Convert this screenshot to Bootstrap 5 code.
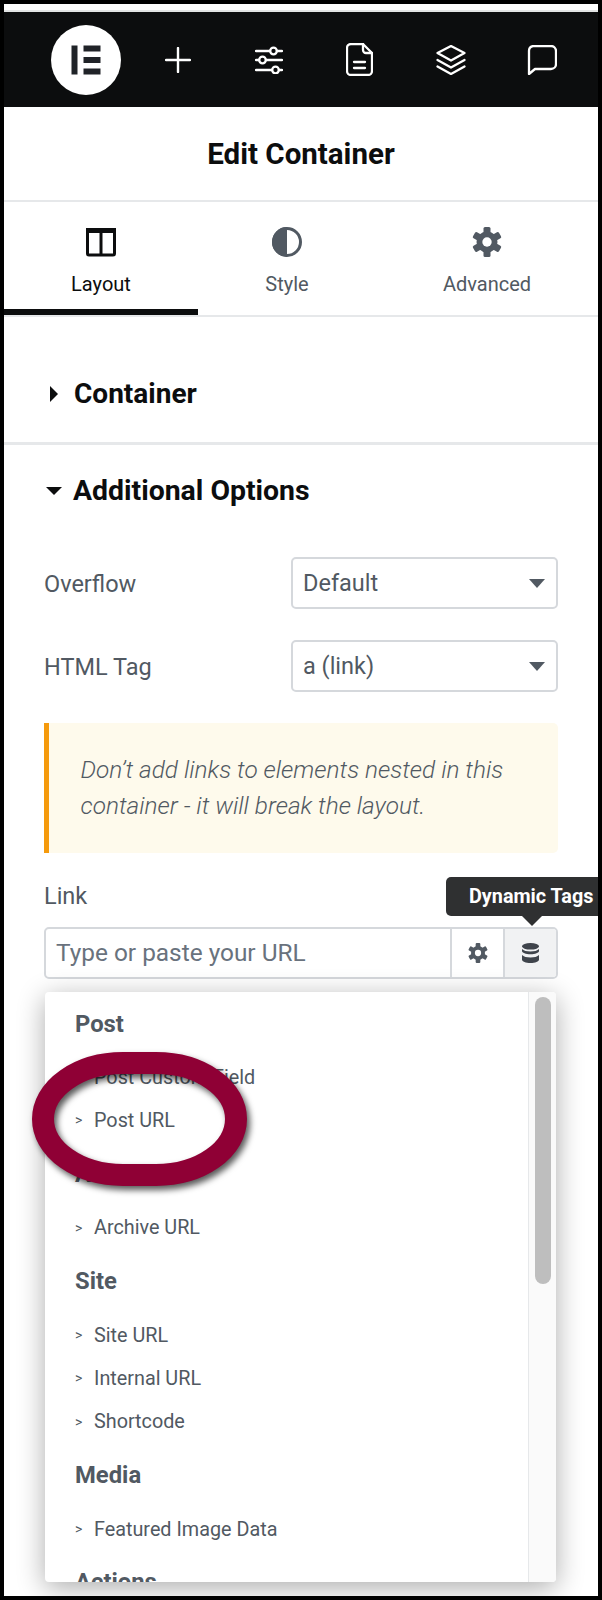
<!DOCTYPE html>
<html lang="en">
<head>
    <title>Edit Container</title>
    <meta charset="utf-8">
    <meta name="viewport" content="width=device-width, initial-scale=1">
    <link href="https://cdn.jsdelivr.net/npm/bootstrap@5.3.0/dist/css/bootstrap.min.css" rel="stylesheet">
    <script src="https://cdn.jsdelivr.net/npm/bootstrap@5.3.0/dist/js/bootstrap.bundle.min.js"></script>
    <style>
        body { margin: 0; background: #000; font-family: Roboto, "Liberation Sans", sans-serif; color: #515962; }
        .frame { width: 602px; height: 1600px; border: 4px solid #000; background: #fff; overflow: hidden; }
        .top-strip { height: 8px; border-bottom: 2px solid #e2e4e4; }
        .top-bar { height: 95px; background: #0c0d0e; padding-left: 36px; }
        .bar-cell { width: 91px; }
        .bar-cell.is-logo { width: 92px; }
        .logo-mark { width: 70px; height: 70px; background: #fff; }
        .panel-title { height: 95px; padding-top: 1px; border-bottom: 2px solid #e6e8ea; font-size: 29.5px; font-weight: 700; color: #0c0d0e; }
        .tabs-row { height: 115px; border-bottom: 2px solid #e6e8ea; }
        .tab-item { height: 113px; padding-top: 25px; font-size: 20px; line-height: 24px; color: #515962; }
        .tab-item svg { display: block; margin-bottom: 15px; }
        .tab-item.is-active { color: #0c0d0e; border-bottom: 6px solid #0c0d0e; }
        .tab-one { width: 194px; }
        .tab-two { width: 178px; }
        .section-head { font-size: 28px; font-weight: 700; line-height: 30px; color: #0c0d0e; }
        .section-closed { height: 128px; padding: 62px 0 33px 46px; border-bottom: 3px solid #e6e8ea; }
        .section-closed .caret-slot { width: 24px; padding-left: 0; }
        .section-open { padding: 31px 40px 0; }
        .section-open .section-head { margin-bottom: 51px; font-size: 28.4px; }
        .caret-slot { width: 29px; padding-left: 2px; }
        .field-row { height: 52px; margin-bottom: 31px; }
        .field-label { width: 247px; padding-top: 3px; font-size: 23.5px; color: #515962; }
        .frame .form-select { width: 267px; height: 52px; padding: 1px 40px 0 10px; border: 2px solid #d5d8dc; border-radius: 5px; font-size: 23.5px; color: #515962;
            background-image: url("data:image/svg+xml,%3Csvg xmlns='http://www.w3.org/2000/svg' viewBox='0 0 16 9'%3E%3Cpath fill='%23515962' d='M0 0h16l-8 9z'/%3E%3C/svg%3E");
            background-size: 16px 9px; background-position: right 11px center; }
        .notice-box { height: 130px; padding: 29px 30px 0 31.5px; border-left: 5.5px solid #f59a0c; border-radius: 0 5px 5px 0; background: #fefaec; font-size: 24.4px; font-weight: 300; font-style: italic; line-height: 36px; color: #515962; margin-bottom: 0; }
        .link-label { padding-top: 26px; height: 74px; font-size: 23.5px; line-height: 34px; color: #515962; }
        .url-group { height: 52px; border: 2px solid #d5d8dc; border-radius: 5px; overflow: hidden; }
        .url-text { padding: 1px 0 0 10px; font-size: 24.4px; color: #69727d; }
        .url-btn { width: 53px; border-left: 2px solid #d5d8dc; }
        .url-btn.is-on { background: #f1f2f3; }
        .tag-tip { left: 442px; top: 873px; width: 190px; height: 39px; padding-left: 23px; background: #2f3031; border-radius: 5px; color: #fff; font-size: 19.8px; font-weight: 700; line-height: 39px; }
        .tag-tip::after { content: ""; position: absolute; left: 76px; top: 39px; border: 10px solid transparent; border-top-color: #2f3031; border-bottom-width: 0; }
        .tags-menu { margin: 13px 2.5px 0 1px; height: 590px; background: #fff; border-radius: 4px; box-shadow: 0 6px 28px rgba(0, 0, 0, .33); overflow: hidden; }
        .tags-list { padding: 1px 0 0 30px; }
        .tags-group { height: 64px; font-size: 23.8px; font-weight: 700; color: #515962; }
        .tags-group.is-first { height: 63px; }
        .tags-item { height: 43.3px; font-size: 19.8px; color: #515962; }
        .tags-chev { width: 19px; font-size: 14px; }
        .tags-scroll { width: 28px; padding: 5px 5px 0 6px; border-left: 1px solid #e6e8ea; background: #fafafa; }
        .tags-thumb { height: 287px; border-radius: 8px; background: #bebebe; }
        .ring-mark { left: 28px; top: 1048px; filter: drop-shadow(3px 4px 3px rgba(0, 0, 0, .65)); }
    </style>
</head>
<body>
<div class="frame position-relative">
    <div class="top-strip"></div>
    <div class="top-bar d-flex align-items-center">
        <div class="bar-cell is-logo d-flex justify-content-center">
            <div class="logo-mark rounded-circle d-flex align-items-center justify-content-center">
                <svg width="30" height="30" viewBox="0 0 30 30"><g fill="#202328"><rect x="0.5" y="0.5" width="6" height="29"/><rect x="12.5" y="0.5" width="17" height="6"/><rect x="12.5" y="12" width="17" height="6"/><rect x="12.5" y="23.5" width="17" height="6"/></g></svg>
            </div>
        </div>
        <div class="bar-cell d-flex justify-content-center">
            <svg width="26" height="26" viewBox="0 0 26 26" stroke="#fff" stroke-width="2.400" stroke-linecap="round"><path d="M13 1v24M1 13h24"/></svg>
        </div>
        <div class="bar-cell d-flex justify-content-center">
            <svg width="28" height="28" viewBox="0 0 28 28" fill="none" stroke="#fff" stroke-width="2.300" stroke-linecap="round"><path d="M1 5h14M22 5h5M1 14h3M11 14h16M1 24h16M24 24h3"/><circle cx="18.500" cy="5" r="3.300"/><circle cx="7.500" cy="14" r="3.300"/><circle cx="20.500" cy="24" r="3.300"/></svg>
        </div>
        <div class="bar-cell d-flex justify-content-center">
            <svg width="27" height="33" viewBox="0 0 27 33" fill="none" stroke="#fff" stroke-width="2.300" stroke-linejoin="round" stroke-linecap="round"><path d="M5 1h12l9 9v18a4 4 0 0 1-4 4H5a4 4 0 0 1-4-4V5a4 4 0 0 1 4-4z"/><path d="M17 1v6a3 3 0 0 0 3 3h6M8 19h11M8 25h11"/></svg>
        </div>
        <div class="bar-cell d-flex justify-content-center">
            <svg width="30" height="30" viewBox="0 0 30 30" fill="none" stroke="#fff" stroke-width="2.300" stroke-linejoin="round" stroke-linecap="round"><path d="M15 1 28.500 8 15 15.500 1.500 8z"/><path d="M1.500 15 15 22.500 28.500 15M1.500 21.500 15 29 28.500 21.500"/></svg>
        </div>
        <div class="bar-cell d-flex justify-content-center">
            <svg width="30" height="30" viewBox="0 0 30 30" fill="none" stroke="#fff" stroke-width="2.300" stroke-linejoin="round"><path d="M6 1h18a5 5 0 0 1 5 5v13a5 5 0 0 1-5 5H8l-6 5V6a5 5 0 0 1 4-5z"/></svg>
        </div>
    </div>
    <div class="panel-title d-flex align-items-center justify-content-center">Edit Container</div>
    <div class="tabs-row d-flex">
        <div class="tab-item is-active tab-one d-flex flex-column align-items-center">
            <svg width="30" height="30" viewBox="0 0 30 30" fill="none" stroke="#0c0d0e"><rect x="1.500" y="2.500" width="27" height="25.500" rx="1.500" stroke-width="3"/><path d="M0 3.500h30" stroke-width="5"/><path d="M15 4v24" stroke-width="3"/></svg>
            Layout
        </div>
        <div class="tab-item tab-two d-flex flex-column align-items-center">
            <svg width="30" height="30" viewBox="0 0 30 30"><circle cx="15" cy="15" r="13.500" fill="#fff" stroke="#515962" stroke-width="3"/><path d="M15 0a15 15 0 0 0 0 30z" fill="#515962"/></svg>
            Style
        </div>
        <div class="tab-item flex-grow-1 d-flex flex-column align-items-center">
            <svg width="30" height="30" viewBox="-15 -15 30 30"><g fill="#515962"><circle r="10.500"/><rect x="-3.500" y="-15" width="7" height="30" rx="1.500"/><rect x="-3.500" y="-15" width="7" height="30" rx="1.500" transform="rotate(60)"/><rect x="-3.500" y="-15" width="7" height="30" rx="1.500" transform="rotate(120)"/></g><circle r="4.700" fill="#fff"/></svg>
            Advanced
        </div>
    </div>
    <div class="section-closed section-head d-flex align-items-center">
        <span class="caret-slot d-flex"><svg width="8" height="16" viewBox="0 0 8 16"><path d="M0 0l8 8-8 8z" fill="#0c0d0e"/></svg></span>
        Container
    </div>
    <div class="section-open">
        <div class="section-head d-flex align-items-center">
            <span class="caret-slot d-flex"><svg width="16" height="8" viewBox="0 0 16 8"><path d="M0 0h16l-8 8z" fill="#0c0d0e"/></svg></span>
            Additional Options
        </div>
        <div class="field-row d-flex align-items-center">
            <div class="field-label">Overflow</div>
            <select class="form-select"><option>Default</option></select>
        </div>
        <div class="field-row d-flex align-items-center">
            <div class="field-label">HTML Tag</div>
            <select class="form-select"><option>a (link)</option></select>
        </div>
        <p class="notice-box">Don’t add links to elements nested in this container - it will break the layout.</p>
        <div class="link-label">Link</div>
        <div class="url-group d-flex">
            <div class="url-text flex-grow-1 d-flex align-items-center">Type or paste your URL</div>
            <div class="url-btn d-flex align-items-center justify-content-center">
                <svg width="20" height="20" viewBox="-15 -15 30 30"><g fill="#515962"><circle r="10.500"/><rect x="-3.500" y="-15" width="7" height="30" rx="1.500"/><rect x="-3.500" y="-15" width="7" height="30" rx="1.500" transform="rotate(60)"/><rect x="-3.500" y="-15" width="7" height="30" rx="1.500" transform="rotate(120)"/></g><circle r="4.700" fill="#fff"/></svg>
            </div>
            <div class="url-btn is-on d-flex align-items-center justify-content-center">
                <svg width="17" height="20" viewBox="0 0 17 20" fill="#3f444b"><ellipse cx="8.500" cy="3.300" rx="8.500" ry="3.300"/><path d="M0 6v2c0 1.800 3.800 3.300 8.500 3.300S17 9.800 17 8V6c-1.500 1.700-4.800 2.500-8.500 2.500S1.500 7.700 0 6z"/><path d="M0 12v4.500C0 18.500 3.800 20 8.500 20s8.500-1.500 8.500-3.500V12c-1.500 1.700-4.800 2.500-8.500 2.500S1.500 13.700 0 12z"/></svg>
            </div>
        </div>
        <div class="tags-menu d-flex">
            <div class="tags-list flex-grow-1">
                <div class="tags-group is-first d-flex align-items-center">Post</div>
                <div class="tags-item d-flex align-items-center"><span class="tags-chev">&gt;</span>Post Custom Field</div>
                <div class="tags-item d-flex align-items-center"><span class="tags-chev">&gt;</span>Post URL</div>
                <div class="tags-group d-flex align-items-center">Archive</div>
                <div class="tags-item d-flex align-items-center"><span class="tags-chev">&gt;</span>Archive URL</div>
                <div class="tags-group d-flex align-items-center">Site</div>
                <div class="tags-item d-flex align-items-center"><span class="tags-chev">&gt;</span>Site URL</div>
                <div class="tags-item d-flex align-items-center"><span class="tags-chev">&gt;</span>Internal URL</div>
                <div class="tags-item d-flex align-items-center"><span class="tags-chev">&gt;</span>Shortcode</div>
                <div class="tags-group d-flex align-items-center">Media</div>
                <div class="tags-item d-flex align-items-center"><span class="tags-chev">&gt;</span>Featured Image Data</div>
                <div class="tags-group d-flex align-items-center">Actions</div>
            </div>
            <div class="tags-scroll"><div class="tags-thumb"></div></div>
        </div>
    </div>
    <div class="tag-tip position-absolute">Dynamic Tags</div>
    <svg class="ring-mark position-absolute" width="215" height="134" viewBox="0 0 215 134" fill="none"><rect x="11" y="11" width="193" height="112" rx="80" ry="56" stroke="#8f0035" stroke-width="22"/></svg>
</div>
</body>
</html>
